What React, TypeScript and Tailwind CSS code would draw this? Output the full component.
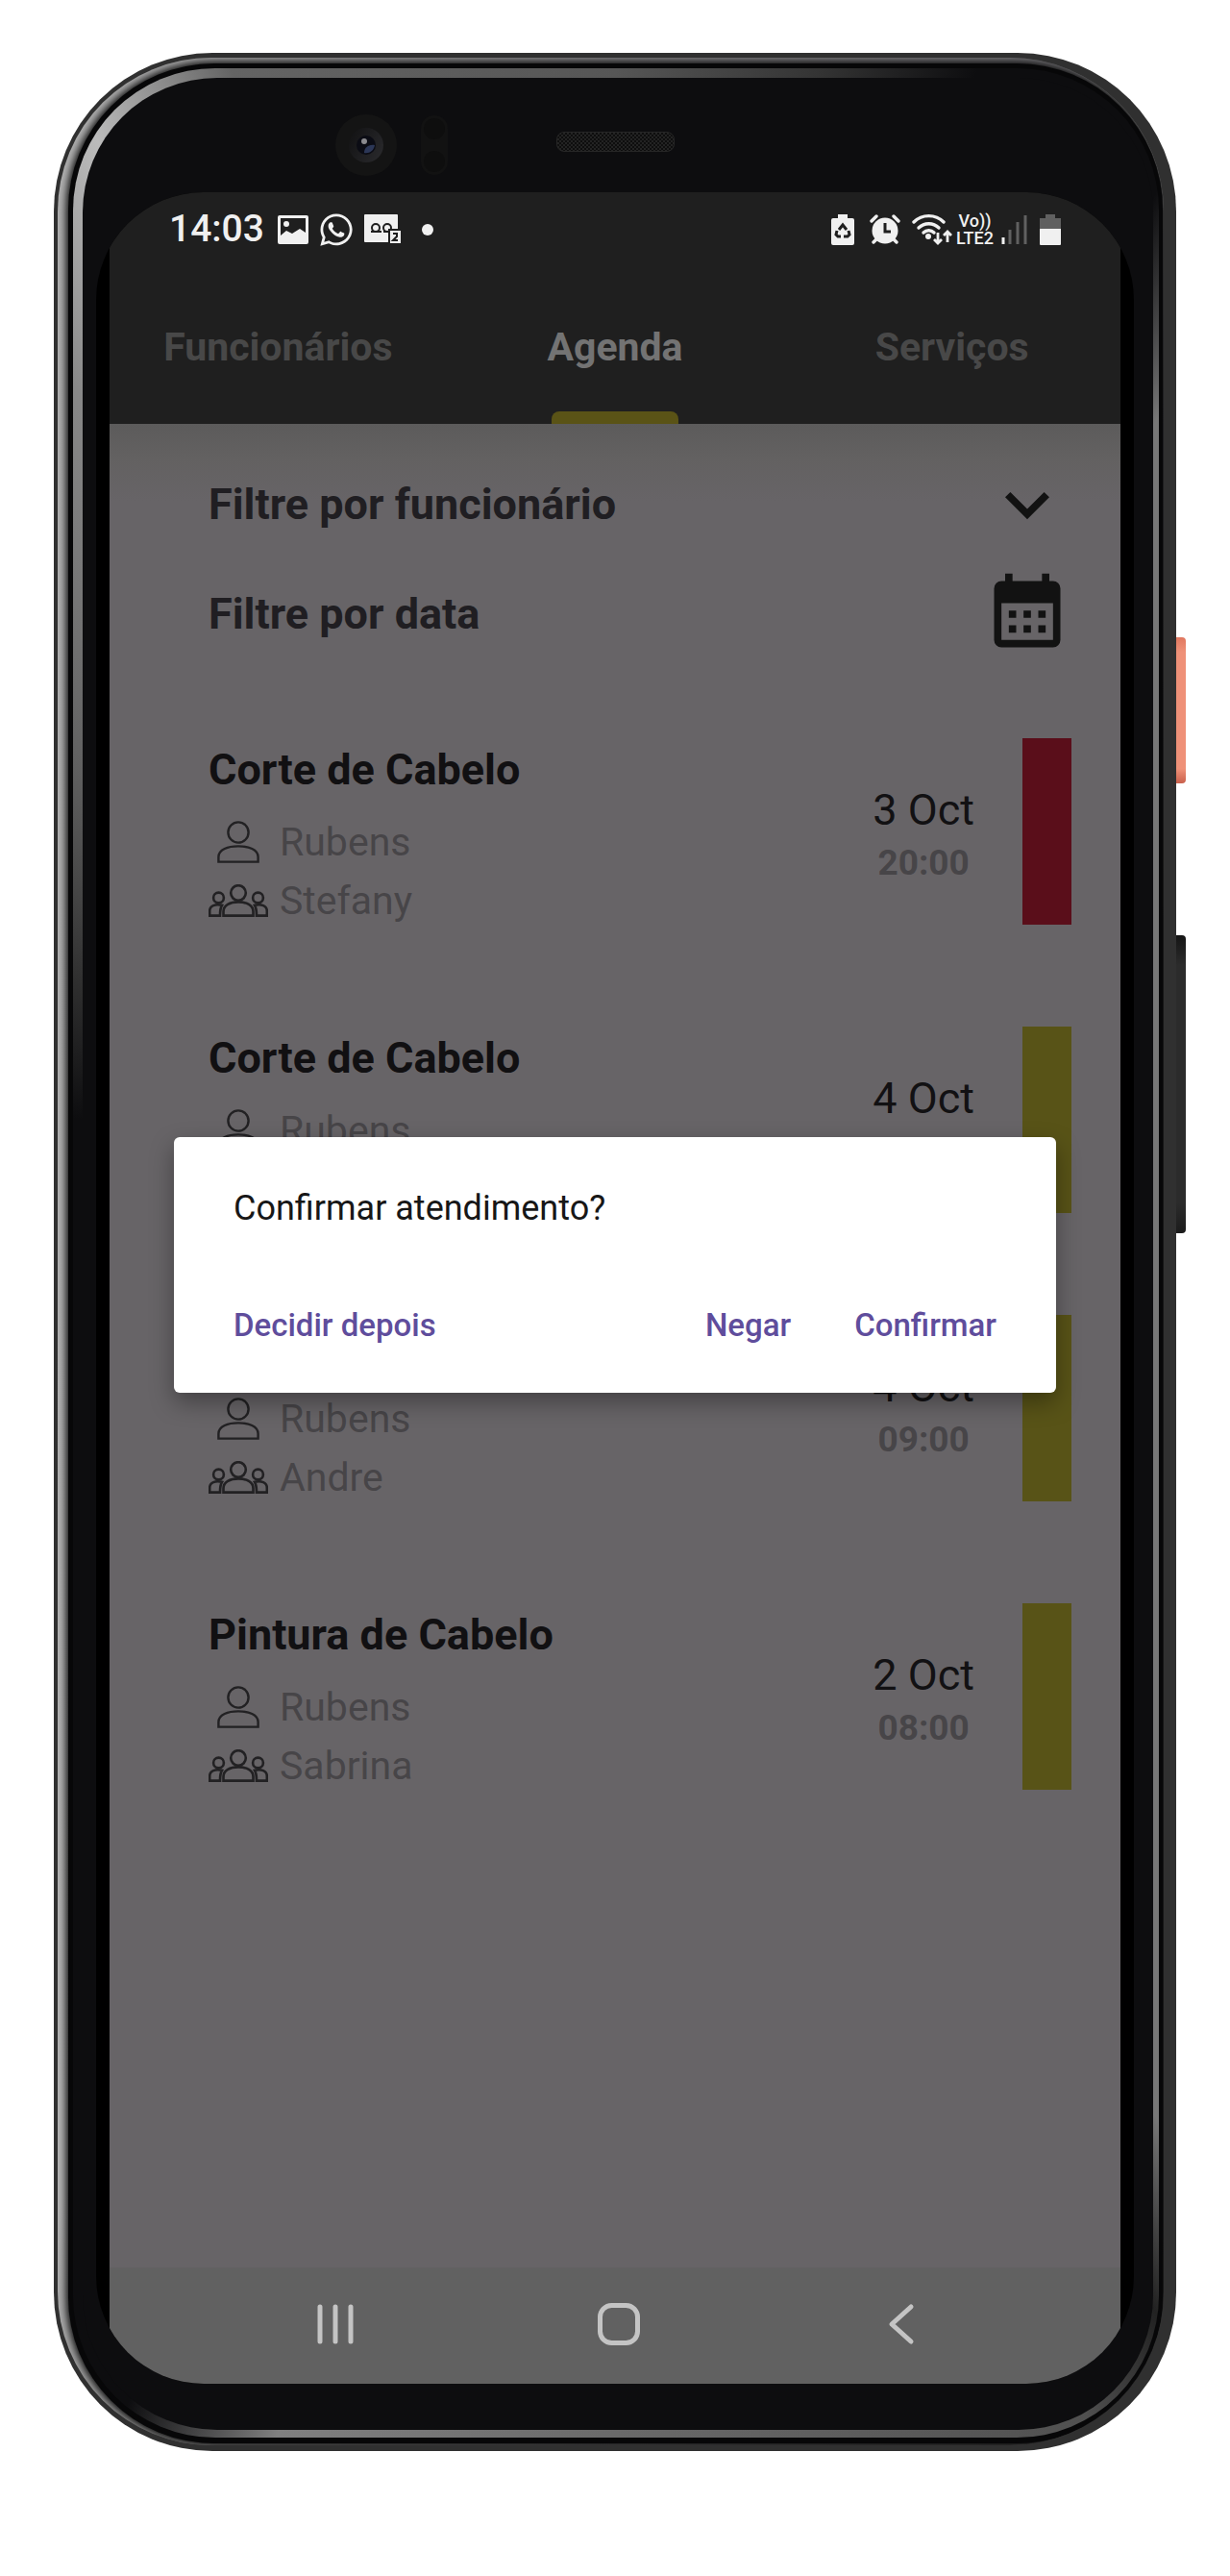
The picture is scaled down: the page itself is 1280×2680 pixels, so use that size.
import React from "react";
import { FaWhatsapp } from "react-icons/fa";

type Appointment = {
  service: string;
  employee: string;
  client: string;
  date: string;
  time: string;
  status: "denied" | "pending";
};

const appointments: Appointment[] = [
  { service: "Corte de Cabelo", employee: "Rubens", client: "Stefany", date: "3 Oct", time: "20:00", status: "denied" },
  { service: "Corte de Cabelo", employee: "Rubens", client: "Andre", date: "4 Oct", time: "08:00", status: "pending" },
  { service: "Corte de Cabelo", employee: "Rubens", client: "Andre", date: "4 Oct", time: "09:00", status: "pending" },
  { service: "Pintura de Cabelo", employee: "Rubens", client: "Sabrina", date: "2 Oct", time: "08:00", status: "pending" },
];

function PictureIcon() {
  return (
    <svg width="32" height="30" viewBox="0 0 32 30" aria-hidden="true">
      <path
        fill="#f0f0f0"
        fillRule="evenodd"
        d="M2 0h28a2 2 0 0 1 2 2v26a2 2 0 0 1-2 2H2a2 2 0 0 1-2-2V2a2 2 0 0 1 2-2zM3 3v18l6-5 6 3 8-5 6 4V3z"
      />
      <circle cx="9" cy="9" r="3" fill="#f0f0f0" />
    </svg>
  );
}

function VoicemailIcon() {
  return (
    <svg width="38" height="31" viewBox="0 0 38 31" aria-hidden="true">
      <rect width="35" height="29" rx="1" fill="#f0f0f0" />
      <g fill="none" stroke="#1f1f1f" strokeWidth="2">
        <circle cx="12" cy="14" r="4" />
        <circle cx="24" cy="14" r="4" />
        <path d="M7 18h11M20 18h5" />
      </g>
      <rect x="25" y="15" width="13" height="16" fill="#1f1f1f" />
      <rect x="27" y="17" width="11" height="13" fill="#f0f0f0" />
      <path d="M30 20h4v3l-4 4h5" fill="none" stroke="#1f1f1f" strokeWidth="2" />
    </svg>
  );
}

function BatteryRecycleIcon() {
  return (
    <svg width="24" height="32" viewBox="0 0 24 32" aria-hidden="true">
      <path d="M7 0h10v4h5a2 2 0 0 1 2 2v24a2 2 0 0 1-2 2H2a2 2 0 0 1-2-2V6a2 2 0 0 1 2-2h5z" fill="#f0f0f0" />
      <g fill="none" stroke="#1f1f1f" strokeWidth="3">
        <path d="M8 16l4-5 4 5" />
        <path d="M6 17l-1 4 2 2h3" />
        <path d="M18 17l1 4-2 2h-4" />
      </g>
    </svg>
  );
}

function AlarmIcon() {
  return (
    <svg width="32" height="32" viewBox="0 0 32 32" aria-hidden="true">
      <g stroke="#f0f0f0" strokeWidth="3.4" strokeLinecap="round">
        <path d="M2 7l5-5M30 7l-5-5M4 29l4-4M28 29l-4-4" />
      </g>
      <circle cx="16" cy="17" r="13.5" fill="#f0f0f0" />
      <path d="M16 9v9h6" fill="none" stroke="#1f1f1f" strokeWidth="3" />
    </svg>
  );
}

function WifiIcon() {
  return (
    <svg width="42" height="33" viewBox="0 0 42 33" aria-hidden="true">
      <g fill="none" stroke="#f0f0f0" strokeWidth="3.4" strokeLinecap="round">
        <path d="M2 9a22 22 0 0 1 31 0" />
        <path d="M7 15a15 15 0 0 1 21 0" />
        <path d="M12 20a8 8 0 0 1 11 0" />
      </g>
      <circle cx="17" cy="24" r="3" fill="#f0f0f0" />
      <path d="M27 20v10M23 27l4 4 4-4M37 30V19M33 23l4-4 4 4" fill="none" stroke="#f0f0f0" strokeWidth="2.8" />
    </svg>
  );
}

function SignalIcon() {
  return (
    <svg width="28" height="31" viewBox="0 0 28 31" aria-hidden="true">
      <path d="M2 31v-7" stroke="#f0f0f0" strokeWidth="3" />
      <path d="M9 31V16M17 31V8M25 31V1" stroke="#606060" strokeWidth="3" />
    </svg>
  );
}

function BatteryIcon() {
  return (
    <svg width="22" height="32" viewBox="0 0 22 32" aria-hidden="true">
      <path d="M6 0h10v4h6v12H0V4h6z" fill="#606060" />
      <path d="M0 15h22v16a1 1 0 0 1-1 1H1a1 1 0 0 1-1-1z" fill="#f0f0f0" />
    </svg>
  );
}

function StatusBar() {
  return (
    <div className="flex h-[77px] items-center justify-between bg-[#1f1f1f] px-[62px] text-[#f0f0f0]">
      <div className="flex items-center">
        <span className="mr-3.5 text-[39px] leading-none font-medium">14:03</span>
        <PictureIcon />
        <FaWhatsapp size={38} className="mx-2.5" aria-hidden="true" />
        <VoicemailIcon />
        <span className="ml-[22px] size-3 rounded-full bg-[#f0f0f0]" />
      </div>
      <div className="flex items-center">
        <BatteryRecycleIcon />
        <span className="ml-4 flex">
          <AlarmIcon />
        </span>
        <span className="mr-1 ml-3 flex">
          <WifiIcon />
        </span>
        <span className="mr-2 flex flex-col items-center text-[18px] leading-[18px] font-medium">
          <span>Vo))</span>
          <span>LTE2</span>
        </span>
        <SignalIcon />
        <span className="ml-3 flex">
          <BatteryIcon />
        </span>
      </div>
    </div>
  );
}

function Tab({ label, active = false }: { label: string; active?: boolean }) {
  return (
    <button
      type="button"
      role="tab"
      aria-selected={active}
      className={
        active
          ? "relative flex h-full items-center justify-center pt-1 text-[#737373]"
          : "relative flex h-full items-center justify-center pt-1 text-[#484848]"
      }
    >
      {label}
      {active && (
        <span className="absolute bottom-0 left-1/2 h-[13px] w-[132px] -translate-x-1/2 rounded-t-lg bg-[#5a5316]" />
      )}
    </button>
  );
}

function PersonIcon() {
  return (
    <svg width="44" height="44" viewBox="0 0 44 44" fill="none" stroke="#222123" strokeWidth="2.4" aria-hidden="true">
      <circle cx="22" cy="12" r="10.6" />
      <path d="M1.4 42.6v-5c0-8 10-11.2 20.6-11.2s20.6 3.2 20.6 11.2v5z" />
    </svg>
  );
}

function GroupIcon() {
  return (
    <svg width="62" height="34" viewBox="0 0 62 34" fill="none" stroke="#222123" strokeWidth="2.6" aria-hidden="true">
      <circle cx="31" cy="9" r="7.8" />
      <path d="M15.5 32.6v-4c0-7 7-10.2 15.500-10.200s15.500 3.200 15.500 10.200v4z" />
      <circle cx="10.5" cy="14" r="5.4" />
      <path d="M14 21.800c-7-1.600-12.800.6-12.800 6v4.800h10.800c0-4.600 0-7.600 2-10.800z" />
      <circle cx="51.5" cy="14" r="5.4" />
      <path d="M48 21.800c7-1.600 12.800.6 12.800 6v4.800h-10.800c0-4.600 0-7.600-2-10.800z" />
    </svg>
  );
}

function AppointmentCard({ item }: { item: Appointment }) {
  return (
    <li className="flex h-[194px] items-stretch">
      <div className="flex-1 pt-[9px]">
        <h2 className="text-[45px] leading-[48px] font-bold text-[#111012]">{item.service}</h2>
        <div className="mt-7 flex flex-col gap-[15px] text-[41px] leading-[46px] text-[#474548]">
          <p className="flex items-center gap-3">
            <span className="flex w-[62px] justify-center">
              <PersonIcon />
            </span>
            {item.employee}
          </p>
          <p className="flex items-center gap-3">
            <span className="flex w-[62px] justify-center">
              <GroupIcon />
            </span>
            {item.client}
          </p>
        </div>
      </div>
      <div className="mr-[50px] flex flex-col items-center justify-center pt-3">
        <span className="text-[45px] leading-[54px] text-[#121113]">{item.date}</span>
        <time className="text-[37px] leading-[56px] font-bold text-[#474548]">{item.time}</time>
      </div>
      <div className={item.status === "denied" ? "w-[51px] bg-[#5a0e1a]" : "w-[51px] bg-[#585317]"} />
    </li>
  );
}

function ConfirmDialog() {
  return (
    <div className="absolute inset-0 flex items-center px-[67px] pb-1">
      <div
        role="dialog"
        aria-labelledby="dialog-title"
        className="w-full rounded-md bg-white px-[62px] pt-[52px] pb-12 shadow-[0_10px_24px_rgba(0,0,0,0.35)]"
      >
        <p id="dialog-title" className="text-[36px] leading-[44px] text-[#171717]">
          Confirmar atendimento?
        </p>
        <div className="mt-[78px] flex justify-between text-[33px] leading-[44px] font-medium text-[#5f4d9c]">
          <button type="button">Decidir depois</button>
          <div className="flex gap-[66px]">
            <button type="button">Negar</button>
            <button type="button">Confirmar</button>
          </div>
        </div>
      </div>
    </div>
  );
}

function NavBar() {
  return (
    <nav className="flex h-[121px] items-center justify-between bg-[#616161] pr-[206px] pb-1 pl-[213px]">
      <button type="button" aria-label="Recentes">
        <svg width="44" height="44" viewBox="0 0 44 44" stroke="#c4c4c4" strokeWidth="5" strokeLinecap="round">
          <path d="M6 4v36M22 4v36M38 4v36" />
        </svg>
      </button>
      <button type="button" aria-label="Início">
        <svg width="44" height="44" viewBox="0 0 44 44" fill="none" stroke="#c4c4c4" strokeWidth="5">
          <rect x="2.5" y="2.5" width="39" height="39" rx="12" />
        </svg>
      </button>
      <button type="button" aria-label="Voltar">
        <svg
          width="44"
          height="44"
          viewBox="0 0 44 44"
          fill="none"
          stroke="#c4c4c4"
          strokeWidth="5"
          strokeLinecap="round"
          strokeLinejoin="round"
        >
          <path d="M32 4L12 22l20 18" />
        </svg>
      </button>
    </nav>
  );
}

function Screen() {
  return (
    <div className="overflow-hidden rounded-[112px] bg-black px-3.5">
      <StatusBar />
      <div className="relative">
        <div role="tablist" className="grid h-[164px] grid-cols-3 bg-[#1f1f1f] text-[41px] leading-none font-bold">
          <Tab label="Funcionários" />
          <Tab label="Agenda" active />
          <Tab label="Serviços" />
        </div>
        <main className="bg-[#676467] bg-[linear-gradient(#5c5b5b,#636161_36px,#676467_80px)] pr-[51px] pb-[497px] pl-[103px]">
          <div className="flex flex-col gap-[22px] pt-[38px] text-[45px] font-bold text-[#201e22]">
            <button type="button" className="flex items-center justify-between">
              Filtre por funcionário
              <svg width="92" height="92" viewBox="0 0 24 24" fill="#121212" aria-hidden="true">
                <path d="M7.41 8.580L12 13.170l4.590-4.590L18 10l-6 6-6-6z" />
              </svg>
            </button>
            <button type="button" className="flex items-center justify-between">
              Filtre por data
              <svg width="92" height="92" viewBox="0 0 24 24" fill="#121212" aria-hidden="true">
                <path
                  fillRule="evenodd"
                  d="M6 1h2v2h8V1h2v2h1a2 2 0 0 1 2 2v14a2 2 0 0 1-2 2H5a2 2 0 0 1-2-2V5a2 2 0 0 1 2-2h1zM5 9v10h14V9z"
                />
                <path d="M7 11h2v2H7zM11 11h2v2h-2zM15 11h2v2h-2zM7 15h2v2H7zM11 15h2v2h-2zM15 15h2v2h-2z" />
              </svg>
            </button>
          </div>
          <ul className="mt-[83px] flex flex-col gap-[106px]">
            {appointments.map((item, i) => (
              <AppointmentCard key={i} item={item} />
            ))}
          </ul>
        </main>
        <ConfirmDialog />
      </div>
      <NavBar />
    </div>
  );
}

function Bezel() {
  return (
    <div className="grid h-[119px] grid-cols-[1fr_auto_1fr] items-center pt-5">
      <div className="flex items-center justify-end gap-[25px] pr-[113px]">
        <div className="flex size-16 items-center justify-center rounded-full bg-[#141414]">
          <div className="flex size-9 items-center justify-center rounded-full bg-[linear-gradient(120deg,#111112,#2b2b2e)]">
            <svg width="20" height="20" viewBox="0 0 20 20" aria-hidden="true">
              <circle cx="10" cy="10" r="10" fill="#0b0c14" />
              <path d="M8 18c0-5 4-9 11-8-1 6-6 9-11 8z" fill="#2c3757" />
              <circle cx="8" cy="6" r="3" fill="#8a8a8e" />
            </svg>
          </div>
        </div>
        <div className="flex h-[62px] w-7 flex-col justify-between rounded-full bg-[#121212] p-[3px]">
          <span className="size-[22px] rounded-full bg-[#0e0e0e]" />
          <span className="size-[22px] rounded-full bg-[#0e0e0e]" />
        </div>
      </div>
      <div className="mb-1.5 h-[21px] w-[123px] rounded-lg border border-[#262626] bg-[#0e0e0e] bg-[repeating-conic-gradient(#232323_0_25%,#0e0e0e_0_50%)] bg-[length:4px_4px]" />
    </div>
  );
}

export default function App() {
  return (
    <div className="min-h-screen bg-white px-14 pt-[55px] pb-[130px] font-['Roboto',sans-serif]">
      <div className="relative">
        <div className="absolute top-[608px] -right-2.5 h-[152px] w-4 rounded-r-sm bg-[linear-gradient(#e0775f,#ef9178_10%,#ef9178_90%,#c9604c)]" />
        <div className="absolute top-[918px] -right-2.5 h-[310px] w-4 rounded-r-sm bg-[linear-gradient(#151515,#2b2b2b_10%,#2b2b2b_90%,#1b1b1b)]" />
        <div className="relative rounded-[165px] bg-[#303030] pt-[5px] pr-[13px] pb-1.5 pl-1">
          <div className="overflow-hidden rounded-[160px] bg-[conic-gradient(#858487,#77767a_20deg,#8a8a8a_26deg,#55555a_33deg,#3a3a3a_60deg,#3a3a3a_150deg,#6a6a6c_180deg,#8a8a8a_200deg,#b4b4b4_210deg,#b0b0b0_335deg,#858487)] pt-[6px] pr-px pb-0.5 pl-[11px]">
            <div className="rounded-[152px] bg-[#070708] pt-[5px] pr-1 pb-1.5 pl-[5px] shadow-[0_0_8px_2px_#000]">
              <div className="rounded-[148px] bg-[conic-gradient(#565656,#333333_10deg,#0d0d0f_17deg,#0d0d0f_27deg,#777777_33deg,#777777_148deg,#222222_153deg,#505050_158deg,#6a6a6a_180deg,#808080_196deg,#0d0d0f_203deg,#0d0d0f_284deg,#303030_297deg,#606060_312deg,#888888_328deg,#bbbbbb_335deg,#646464_342deg,#565656)] pt-[10px] pr-1.5 pb-2 pl-[10px]">
                <div className="rounded-[140px] bg-[#0d0d0f] pr-5 pb-12 pl-3.5">
                  <Bezel />
                  <Screen />
                </div>
              </div>
            </div>
          </div>
        </div>
      </div>
    </div>
  );
}
